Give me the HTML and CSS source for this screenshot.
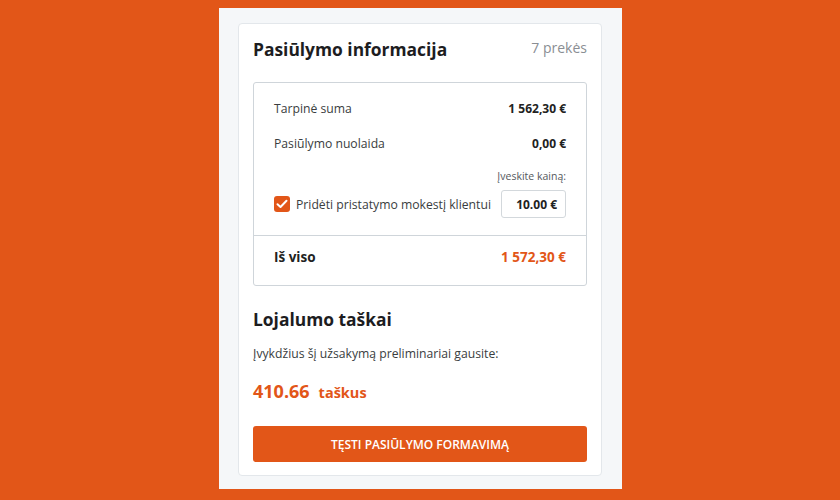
FILE: index.html
```html
<!DOCTYPE html>
<html lang="lt">
<head>
<meta charset="utf-8">
<link rel="stylesheet" href="styles.css">
</head>
<body>
<div class="panel">
  <div class="card">
    <div class="header">
      <h2 class="title">Pasiūlymo informacija</h2>
      <span class="count">7 prekės</span>
    </div>
    <div class="summary">
      <div class="summary-top">
        <div class="row">
          <span class="label">Tarpinė suma</span>
          <span class="value">1 562,30 €</span>
        </div>
        <div class="row">
          <span class="label">Pasiūlymo nuolaida</span>
          <span class="value">0,00 €</span>
        </div>
        <div class="hint">Įveskite kainą:</div>
        <div class="row delivery">
          <label class="check">
            <span class="box"><svg width="12" height="10" viewBox="0 0 12 10"><path d="M1.5 5.2 L4.5 8 L10.5 1.8" fill="none" stroke="#fff" stroke-width="2" stroke-linecap="round" stroke-linejoin="round"/></svg></span>
            <span class="label">Pridėti pristatymo mokestį klientui</span>
          </label>
          <span class="price-input">10.00 €</span>
        </div>
      </div>
      <div class="summary-total">
        <span class="total-label">Iš viso</span>
        <span class="total-value">1 572,30 €</span>
      </div>
    </div>
    <h2 class="title loyalty">Lojalumo taškai</h2>
    <p class="note">Įvykdžius šį užsakymą preliminariai gausite:</p>
    <div class="points"><span class="points-num">410.66</span><span class="points-unit">taškus</span></div>
    <button class="cta">Tęsti pasiūlymo formavimą</button>
  </div>
</div>
</body>
</html>
```
FILE: styles.css
```css
* { box-sizing: border-box; }
html, body { margin: 0; padding: 0; }
body {
  background: #e25618;
  font-family: "Open Sans", "Noto Sans", sans-serif;
  padding-top: 8px;
  height: 500px;
}
.panel {
  width: 403px;
  height: 481px;
  margin: 0 auto 0 219px;
  background: #f5f7f9;
  padding: 15px 20px 13px 19px;
}
.card {
  background: #fff;
  border: 1px solid #e3e7eb;
  border-radius: 4px;
  padding: 13px 14px 13px 14px;
  height: 453px;
}
.header {
  display: flex;
  justify-content: space-between;
  align-items: center;
  margin-bottom: 21px;
}
.title {
  margin: 0;
  font-size: 17.4px;
  line-height: 24px;
  font-weight: 700;
  color: #1d1d1f;
}
.count {
  font-size: 14px;
  line-height: 20px;
  color: #8a8e93;
  font-weight: 500;
  margin-top: -3px;
}
.summary {
  border: 1px solid #cfd5da;
  border-radius: 3px;
}
.summary-top {
  padding: 15px 20px 17px 20px;
}
.row {
  display: flex;
  justify-content: space-between;
  align-items: center;
  height: 20px;
  margin-bottom: 15px;
}
.label {
  font-size: 12.2px;
  color: #3a3d40;
}
.value {
  font-size: 12px;
  font-weight: 700;
  color: #222;
}
.hint {
  text-align: right;
  font-size: 10.5px;
  line-height: 14px;
  color: #55595d;
  margin-top: 16px;
  margin-bottom: 7px;
}
.row.delivery {
  height: 28px;
  margin-bottom: 0;
}
.check {
  display: flex;
  align-items: center;
  gap: 6px;
}
.box {
  width: 16px;
  height: 16px;
  border-radius: 3px;
  background: #e25618;
  display: flex;
  align-items: center;
  justify-content: center;
}
.price-input {
  width: 65px;
  height: 28px;
  border: 1px solid #d3d8dc;
  border-radius: 3px;
  display: flex;
  align-items: center;
  justify-content: flex-end;
  padding-right: 8px;
  font-size: 12px;
  font-weight: 700;
  color: #222;
}
.summary-total {
  border-top: 1px solid #cfd5da;
  padding: 11px 20px 18px 20px;
  display: flex;
  justify-content: space-between;
  align-items: center;
  line-height: 20px;
}
.total-label {
  font-size: 13.5px;
  font-weight: 700;
  color: #222;
}
.total-value {
  font-size: 13.5px;
  font-weight: 700;
  color: #e25618;
}
.loyalty {
  margin-top: 21px;
}
.note {
  margin: 13px 0 0;
  font-size: 12.2px;
  line-height: 20px;
  color: #3a3d40;
}
.points {
  margin-top: 15px;
  line-height: 24px;
  color: #e25618;
  font-weight: 700;
}
.points-num { font-size: 18px; }
.points-unit { font-size: 14.5px; margin-left: 9px; }
.cta {
  display: block;
  width: 100%;
  height: 36px;
  margin-top: 21px;
  border: 0;
  border-radius: 3px;
  background: #e25618;
  color: #fff;
  font-family: inherit;
  font-size: 12px;
  font-weight: 600;
  text-transform: uppercase;
}
```
